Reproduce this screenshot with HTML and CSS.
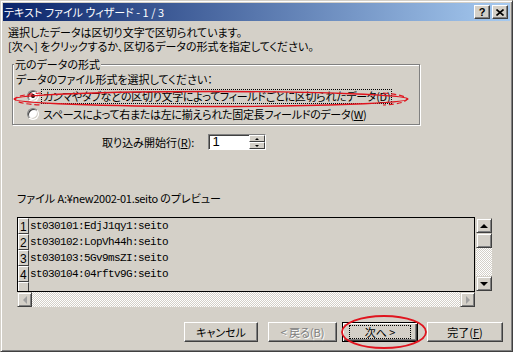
FILE: index.html
```html
<!DOCTYPE html>
<html lang="ja">
<head>
  <meta charset="UTF-8" />
  <title>テキスト ファイル ウィザード</title>
  <link rel="stylesheet" href="styles.css">
</head>
<body>

  <div class="window">

    <!-- Title bar -->
    <div class="titlebar">
      <span class="title">テキスト ファイル ウィザード - 1 / 3</span>
      <div class="title-buttons">
        <span class="tbtn help">?</span>
        <span class="tbtn">
          <svg width="8" height="7" viewBox="0 0 8 7"><path d="M0.5 0.5 L7.5 6.5 M7.5 0.5 L0.5 6.5" stroke="#000" stroke-width="1.6" fill="none"/></svg>
        </span>
      </div>
    </div>

    <div class="content">
      <p class="intro">選択したデータは区切り文字で区切られています。<br>[次へ] をクリックするか、区切るデータの形式を指定してください。</p>

      <fieldset class="group">
        <legend>元のデータの形式</legend>
        <div class="group-hint">データのファイル形式を選択してください：</div>
        <div class="radio-row">
          <span class="radio checked"></span>
          <span class="radio-text focused">カンマやタブなどの区切り文字によってフィールドごとに区切られたデータ(<u>D</u>)</span>
        </div>
        <div class="radio-row">
          <span class="radio"></span>
          <span class="radio-text">スペースによって右または左に揃えられた固定長フィールドのデータ(<u>W</u>)</span>
        </div>
      </fieldset>

      <div class="start-row">
        <span>取り込み開始行(<u>R</u>):</span>
        <div class="spin">
          <span class="spin-value">1</span>
          <div class="spin-buttons">
            <span class="spin-btn"><i class="arrow up tiny"></i></span>
            <span class="spin-btn"><i class="arrow down tiny"></i></span>
          </div>
        </div>
      </div>

      <div class="preview-label">ファイル <span class="latin">A:¥new2002-01.seito</span> のプレビュー</div>

      <div class="preview">
        <div class="preview-main">
          <div class="preview-box">
            <div class="prow"><span class="pnum">1</span><span class="ptext">st030101:EdjJ1qy1:seito</span></div>
            <div class="prow"><span class="pnum">2</span><span class="ptext">st030102:LopVh44h:seito</span></div>
            <div class="prow"><span class="pnum">3</span><span class="ptext">st030103:5Gv9msZI:seito</span></div>
            <div class="prow"><span class="pnum">4</span><span class="ptext">st030104:04rftv9G:seito</span></div>
            <div class="prow"><span class="pnum"></span></div>
          </div>
          <div class="hscroll">
            <span class="sbtn"><i class="arrow left off"></i></span>
            <span class="sbtn"><i class="arrow right off"></i></span>
          </div>
        </div>
        <div class="vscroll">
          <span class="sbtn"><i class="arrow up"></i></span>
          <span class="sbtn thumb"></span>
          <span class="track"></span>
          <span class="sbtn"><i class="arrow down"></i></span>
        </div>
      </div>

      <div class="button-row">
        <button class="button btn-cancel">キャンセル</button>
        <button class="button btn-back disabled">&lt; 戻る(B)</button>
        <button class="button btn-next default"><span class="focus-text">次へ &gt;</span></button>
        <button class="button btn-finish">完了(<u>F</u>)</button>
      </div>
    </div>

    <!-- red hand-drawn marks -->
    <svg class="mark mark-radio" width="400" height="20" viewBox="0 0 400 20">
      <ellipse cx="200" cy="10" rx="197" ry="7.5" fill="none" stroke="#e0141e" stroke-width="1.4"/>
      <path d="M30 4 Q6 6 4 10 Q6 15 30 16" fill="none" stroke="#e0141e" stroke-width="1.2" stroke-dasharray="5 3"/>
      <path d="M372 4 Q395 6 396 10 Q394 15 372 16" fill="none" stroke="#e0141e" stroke-width="1.2" stroke-dasharray="5 3"/>
    </svg>
    <svg class="mark mark-next" width="88" height="36" viewBox="0 0 88 36">
      <ellipse cx="44" cy="18" rx="42" ry="16" fill="none" stroke="#e0141e" stroke-width="1.8"/>
    </svg>

  </div>

</body>
</html>
```

FILE: styles.css
```css
* {
  box-sizing: border-box;
}

body {
  margin: 0;
  background: #d4d0c8;
  font-family: "Noto Sans CJK JP", sans-serif;
  font-size: 11px;
  font-feature-settings: "palt";
  color: #000;
}

u {
  text-decoration: underline;
}

.window {
  position: relative;
  width: 513px;
  height: 352px;
  border: 1px solid;
  border-color: #d4d0c8 #404040 #404040 #d4d0c8;
  box-shadow: inset 1px 1px 0 #fff, inset -1px -1px 0 #808080;
  padding: 2px;
  overflow: hidden;
}

/* title bar */
.titlebar {
  height: 18px;
  display: flex;
  align-items: center;
  justify-content: space-between;
  padding: 0 2px 0 1px;
  background: linear-gradient(to right, #0a246a, #a6caf0);
}

.title {
  color: #fff;
  line-height: 18px;
}

.title-buttons {
  display: flex;
  gap: 2px;
}

.tbtn {
  width: 16px;
  height: 14px;
  display: flex;
  align-items: center;
  justify-content: center;
  background: #d4d0c8;
  border: 1px solid;
  border-color: #fff #404040 #404040 #fff;
  box-shadow: inset -1px -1px 0 #808080;
}

.help {
  font-family: "Liberation Sans", sans-serif;
  font-weight: bold;
  font-size: 11px;
  line-height: 1;
}

/* body */
.content {
  padding: 4px 5px 0 5px;
}

.intro {
  margin: 0;
  line-height: 14px;
}

.group {
  width: 408px;
  margin: 4px 0 0 4px;
  padding: 1px 3px 1px 3px;
  border: 1px solid #808080;
  box-shadow: inset 1px 1px 0 #fff, 1px 1px 0 #fff;
}

.group legend {
  padding: 0 1px;
  margin-left: -2px;
  line-height: 14px;
  background: #d4d0c8;
}

.group-hint {
  line-height: 15px;
}

.radio-row {
  display: flex;
  align-items: center;
  height: 18px;
  padding-left: 11px;
  white-space: nowrap;
}

.radio {
  width: 12px;
  height: 12px;
  border-radius: 50%;
  background: #fff;
  border: 1px solid;
  border-color: #808080 #fff #fff #808080;
  box-shadow: inset 1px 1px 0 #404040, inset -1px -1px 0 #d4d0c8;
  display: flex;
  align-items: center;
  justify-content: center;
  margin-right: 3px;
}

.radio.checked::after {
  content: "";
  width: 4px;
  height: 4px;
  border-radius: 50%;
  background: #000;
}

.radio-text {
  padding: 0 1px;
  line-height: 13px;
  letter-spacing: -0.3px;
}

.radio-text.focused {
  outline: 1px dotted #000;
}

/* start row spinner */
.start-row {
  display: flex;
  align-items: center;
  gap: 14px;
  margin: 9px 0 0 94px;
}

.spin {
  width: 58px;
  height: 16px;
  display: flex;
  justify-content: space-between;
  background: #fff;
  border: 1px solid;
  border-color: #808080 #fff #fff #808080;
  box-shadow: inset 1px 1px 0 #404040;
}

.spin-value {
  padding: 0 0 0 3px;
  line-height: 14px;
  font-family: "Liberation Sans", sans-serif;
  font-size: 13px;
}

.spin-buttons {
  display: flex;
  flex-direction: column;
  width: 16px;
}

.spin-btn {
  flex: 1;
  display: flex;
  align-items: center;
  justify-content: center;
  background: #d4d0c8;
  border: 1px solid;
  border-color: #fff #404040 #404040 #fff;
}

/* preview */
.preview-label {
  margin: 41px 0 0 9px;
  line-height: 14px;
}

.preview-label .latin {
  letter-spacing: -0.3px;
}

.preview {
  display: flex;
  margin: 12px 0 0 9px;
}

.preview-main {
  width: 458px;
}

.preview-box {
  height: 75px;
  border: 1px solid #000;
  overflow: hidden;
}

.prow {
  display: flex;
  height: 16px;
}

.pnum {
  width: 11px;
  height: 16px;
  flex-shrink: 0;
  border-top: 1px solid #fff;
  border-left: 1px solid #fff;
  border-right: 1px solid #404040;
  border-bottom: 1px solid #404040;
  font-family: "Liberation Sans", sans-serif;
  font-size: 12px;
  line-height: 17px;
  padding-left: 1px;
}

.ptext {
  font-family: "Liberation Mono", monospace;
  font-size: 11px;
  letter-spacing: -0.6px;
  line-height: 16px;
  padding-left: 1px;
}

.hscroll {
  height: 15px;
  display: flex;
  justify-content: space-between;
  background: repeating-conic-gradient(#fff 0 25%, #d4d0c8 0 50%) 0 0 / 2px 2px;
}

.vscroll {
  width: 16px;
  height: 73px;
  margin: 1px 0 0 1px;
  display: flex;
  flex-direction: column;
}

.vscroll .sbtn {
  height: 15px;
  width: 16px;
}

.vscroll .track {
  flex: 1;
  background: repeating-conic-gradient(#fff 0 25%, #d4d0c8 0 50%) 0 0 / 2px 2px;
}

.sbtn {
  width: 15px;
  height: 15px;
  display: flex;
  align-items: center;
  justify-content: center;
  background: #d4d0c8;
  border: 1px solid;
  border-color: #d4d0c8 #404040 #404040 #d4d0c8;
  box-shadow: inset 1px 1px 0 #fff, inset -1px -1px 0 #808080;
}

.arrow {
  width: 0;
  height: 0;
  border: 4px solid transparent;
}

.arrow.up {
  border-bottom-color: #000;
  border-top-width: 0;
}

.arrow.down {
  border-top-color: #000;
  border-bottom-width: 0;
}

.arrow.left {
  border-right-color: #000;
  border-left-width: 0;
}

.arrow.right {
  border-left-color: #000;
  border-right-width: 0;
}

.arrow.tiny {
  border-width: 2px;
}

.arrow.tiny.up {
  border-top-width: 0;
}

.arrow.tiny.down {
  border-bottom-width: 0;
}

.arrow.off.left {
  border-right-color: #a0a0a0;
}

.arrow.off.right {
  border-left-color: #a0a0a0;
}

/* buttons */
.button-row {
  display: flex;
  justify-content: flex-end;
  margin: 15px 2px 0 0;
}

.button {
  height: 20px;
  padding: 0;
  font-family: inherit;
  font-size: 11px;
  font-feature-settings: "palt";
  color: #000;
  background: #d4d0c8;
  border: 1px solid;
  border-color: #fff #404040 #404040 #fff;
  box-shadow: inset -1px -1px 0 #808080;
}

.btn-cancel {
  width: 74px;
  margin-right: 10px;
}

.btn-back {
  width: 69px;
  margin-right: 5px;
}

.btn-next {
  width: 76px;
  margin-right: 9px;
}

.btn-finish {
  width: 76px;
}

.button.disabled {
  color: #808080;
  text-shadow: 1px 1px 0 #fff;
}

.button.default {
  border: 1px solid #000;
  box-shadow: inset 1px 1px 0 #fff, inset -1px -1px 0 #404040, inset -2px -2px 0 #808080;
}

.focus-text {
  display: inline-block;
  width: 60px;
  outline: 1px dotted #000;
  line-height: 12px;
}

/* red annotation marks */
.mark {
  position: absolute;
}

.mark-radio {
  left: 10px;
  top: 88px;
}

.mark-next {
  left: 339px;
  top: 313px;
}
```
